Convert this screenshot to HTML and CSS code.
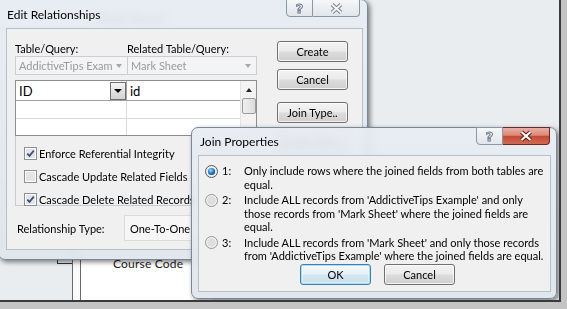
FILE: index.html
```html
<!DOCTYPE html>
<html>
<head>
<meta charset="utf-8">
<link rel="stylesheet" href="styles.css">
</head>
<body>
<div class="screen">
  <div class="bg-mark">Mark Sheet</div>
  <div class="rel-line"></div>
  <div class="table-box">
    <div class="table-inner"><span class="field">Course Code</span></div>
  </div>

  <div class="win edit">
    <div class="titlebar"><span class="title">Edit Relationships</span></div>
    <div class="caption">
      <div class="cap help"><span class="q">?</span></div>
      <div class="cap close">
        <svg width="13" height="11" viewBox="0 0 13 11"><path d="M2 1.5 L11 9.5 M11 1.5 L2 9.5" stroke="#7b8794" stroke-width="4" fill="none"/><path d="M2 1.5 L11 9.5 M11 1.5 L2 9.5" stroke="#f3f5f7" stroke-width="1.8" fill="none"/></svg>
      </div>
    </div>
    <div class="panel edit-panel">
      <div class="top">
        <div class="left">
          <div class="labels"><span>Table/Query:</span><span>Related Table/Query:</span></div>
          <div class="combos">
            <div class="combo"><span>AddictiveTips Exam</span><i class="arrow"></i></div>
            <div class="combo"><span>Mark Sheet</span><i class="arrow"></i></div>
          </div>
          <div class="grid">
            <div class="cells">
              <div class="row r1">
                <div class="cell c1"><span>ID</span><span class="dd"><i class="tri"></i></span></div>
                <div class="cell c2">id</div>
              </div>
              <div class="row"><div class="cell c1"></div><div class="cell c2"></div></div>
              <div class="row last"><div class="cell c1"></div><div class="cell c2"></div></div>
            </div>
            <div class="vscroll">
              <div class="sb-up"><i class="up"></i></div>
              <div class="thumb"></div>
            </div>
          </div>
          <div class="group">
            <div class="chk">
              <svg width="13" height="13" viewBox="0 0 13 13"><rect x="0.5" y="0.5" width="12" height="12" fill="#fff" stroke="#8e8f8f"/><rect x="2" y="2" width="9" height="9" fill="#e2e5e9"/><path d="M3.3 6.6 L5.5 8.9 L9.8 3.6" stroke="#3b4f7a" stroke-width="1.7" fill="none"/></svg>
              <span>Enforce Referential Integrity</span>
            </div>
            <div class="chk">
              <svg width="13" height="13" viewBox="0 0 13 13"><rect x="0.5" y="0.5" width="12" height="12" fill="#fff" stroke="#8e8f8f"/><rect x="2" y="2" width="9" height="9" fill="#e2e5e9"/></svg>
              <span>Cascade Update Related Fields</span>
            </div>
            <div class="chk">
              <svg width="13" height="13" viewBox="0 0 13 13"><rect x="0.5" y="0.5" width="12" height="12" fill="#fff" stroke="#8e8f8f"/><rect x="2" y="2" width="9" height="9" fill="#e2e5e9"/><path d="M3.3 6.6 L5.5 8.9 L9.8 3.6" stroke="#3b4f7a" stroke-width="1.7" fill="none"/></svg>
              <span>Cascade Delete Related Records</span>
            </div>
          </div>
        </div>
        <div class="buttons">
          <div class="btn b-create">Create</div>
          <div class="btn b-cancel">Cancel</div>
          <div class="btn b-join">Join Type..</div>
          <div class="btn b-new">Create New...</div>
        </div>
      </div>
      <div class="reltype">
        <span class="rt-label">Relationship Type:</span>
        <div class="rt-box">One-To-One</div>
      </div>
    </div>
  </div>

  <div class="win join">
    <div class="titlebar"><span class="title">Join Properties</span></div>
    <div class="caption">
      <div class="cap help"><span class="q">?</span></div>
      <div class="cap close active">
        <svg width="14" height="12" viewBox="0 0 14 12"><path d="M2.5 2 L11.5 10 M11.5 2 L2.5 10" stroke="#5a1c14" stroke-width="4.2" fill="none"/><path d="M2.5 2 L11.5 10 M11.5 2 L2.5 10" stroke="#ffffff" stroke-width="2.2" fill="none"/></svg>
      </div>
    </div>
    <div class="panel join-panel">
      <div class="options">
        <div class="opt">
          <svg class="radio" width="13" height="13" viewBox="0 0 13 13"><defs><radialGradient id="rsel" cx="40%" cy="35%" r="65%"><stop offset="0" stop-color="#a9dcff"/><stop offset="0.5" stop-color="#3b8fd6"/><stop offset="1" stop-color="#15477e"/></radialGradient></defs><circle cx="6.5" cy="6.5" r="6" fill="#eef0f2" stroke="#4d5a66"/><circle cx="6.5" cy="6.5" r="3.6" fill="url(#rsel)"/></svg>
          <span class="num">1:</span>
          <span class="txt">Only include rows where the joined fields from both tables are<br>equal.</span>
        </div>
        <div class="opt">
          <svg class="radio" width="13" height="13" viewBox="0 0 13 13"><circle cx="6.5" cy="6.5" r="6" fill="#f2f2f2" stroke="#949494"/><circle cx="6.5" cy="6.5" r="4.4" fill="#dedede"/></svg>
          <span class="num">2:</span>
          <span class="txt">Include ALL records from 'AddictiveTips Example' and only<br>those records from 'Mark Sheet' where the joined fields are<br>equal.</span>
        </div>
        <div class="opt">
          <svg class="radio" width="13" height="13" viewBox="0 0 13 13"><circle cx="6.5" cy="6.5" r="6" fill="#f2f2f2" stroke="#949494"/><circle cx="6.5" cy="6.5" r="4.4" fill="#dedede"/></svg>
          <span class="num">3:</span>
          <span class="txt">Include ALL records from 'Mark Sheet' and only those records<br>from 'AddictiveTips Example' where the joined fields are equal.</span>
        </div>
      </div>
      <div class="actions">
        <div class="btn default">OK</div>
        <div class="btn">Cancel</div>
      </div>
    </div>
  </div>
</div>
</body>
</html>
```
FILE: styles.css
```css
* { box-sizing: border-box; }
html, body { margin: 0; padding: 0; }
body {
  width: 567px; height: 309px; overflow: hidden;
  background: #c4c4c4;
  font-family: Lato, "Noto Sans", sans-serif;
  font-size: 11px; color: #000;
}
.screen {
  position: relative;
  width: 561px; height: 302px;
  background: #e9edf0;
  border-right: 2px solid #3a3a3a;
  border-bottom: 2px solid #3a3a3a;
  overflow: hidden;
}
.bg-mark {
  position: absolute; left: 98px; top: 11px;
  font-size: 13px; font-weight: bold; color: #6a6a6a;
}
.rel-line {
  position: absolute; left: 57px; top: 256px;
  width: 15px; height: 8px;
  border-left: 1px solid #333; border-bottom: 1px solid #333;
}
.table-box {
  position: absolute; left: 72px; top: 240px;
  width: 140px; height: 70px;
  border-left: 1px solid #6a6a6a;
  background: #fafafa;
}
.table-inner {
  margin-left: 7px; height: 100%;
  border-left: 1px solid #6a6a6a;
  background: #fff;
  padding: 17px 0 0 32px;
  line-height: 14px;
  font-size: 12px;
}
.field { color: #222; letter-spacing: 0.2px; }

.win {
  position: absolute;
  border: 1px solid #7a8794;
  background: linear-gradient(rgba(231,236,242,0.9), rgba(223,229,236,0.92));
  backdrop-filter: blur(4px);
  box-shadow: 2px 2px 5px rgba(0,0,0,0.5);
}
.edit { left: -2px; top: -1px; width: 370px; height: 261px; border-radius: 0 7px 7px 7px; }
.join { left: 191px; top: 127px; width: 366px; height: 172px; border-radius: 7px; }

.titlebar { height: 28px; padding-left: 8px; display: flex; align-items: center; }
.join .titlebar { height: 27px; padding-left: 8px; }
.title { font-size: 12px; color: #000; }

.caption { position: absolute; top: -1px; right: 7px; display: flex; }
.join .caption { right: 6px; }
.cap {
  height: 18px; display: flex; align-items: center; justify-content: center;
  border: 1px solid #8a97a4;
  background: linear-gradient(#f5f7f9, #e1e6ec);
}
.help { width: 27px; border-radius: 0 0 0 4px; }
.close { width: 47px; border-left: none; border-radius: 0 0 4px 0; }
.close.active {
  border-color: #6a2a21;
  background: linear-gradient(#e9b0a4 0%, #dc8a79 45%, #c64a34 52%, #cf6a55 100%);
}
.q {
  font-family: "DejaVu Sans", sans-serif; font-weight: bold; font-size: 13px;
  color: #eef2f5; -webkit-text-stroke: 1px #6d7a88; line-height: 1;
}

.panel { background: #f0f0f0; border: 1px solid #b6c0ca; }
.edit-panel {
  margin-left: 7px; width: 357px; height: 222px;
  padding: 12px 0 0 8px;
  display: flex; flex-direction: column;
}
.top { display: flex; }
.left { width: 242px; display: flex; flex-direction: column; }
.labels { display: grid; grid-template-columns: 112px 130px; height: 15px; line-height: 15px; }
.combos { display: grid; grid-template-columns: 113px 129px; height: 19px; }
.combo {
  border: 1px solid #c9ced3; background: #f4f4f4; color: #9a9a9a;
  display: flex; align-items: center; justify-content: space-between;
  padding: 0 4px 0 3px; overflow: hidden; white-space: nowrap;
}
.combo + .combo { border-left: none; }
.arrow {
  flex: none;
  width: 0; height: 0; border-left: 3.5px solid transparent; border-right: 3.5px solid transparent;
  border-top: 4px solid #a8a8a8; margin-right: 1px;
}
.grid {
  margin-top: 5px; height: 56px; display: flex;
  border: 1px solid #8a8e94; background: #fff;
}
.cells { flex: 1; display: flex; flex-direction: column; }
.row { display: grid; grid-template-columns: 111px 1fr; height: 18px; border-bottom: 1px solid #d9d9d9; }
.row.r1 { height: 20px; border-bottom: 1px solid #a0a0a0; }
.row.last { border-bottom: none; height: 16px; }
.cell { display: flex; align-items: center; font-size: 13px; }
.c1 { border-right: 1px solid #d9d9d9; padding-left: 3px; justify-content: space-between; }
.r1 .c1 { border-right: 1px solid #a0a0a0; padding-right: 0; }
.c2 { padding-left: 3px; }
.dd {
  width: 16px; height: 18px; border: 1px solid #707070;
  background: linear-gradient(#f4f4f4, #d2d2d2);
  display: flex; align-items: center; justify-content: center;
}
.tri { width: 0; height: 0; border-left: 4px solid transparent; border-right: 4px solid transparent; border-top: 4px solid #000; }
.vscroll {
  width: 16px; border-left: 1px solid #e4e4e4; background: #f3f3f3;
  display: flex; flex-direction: column; align-items: center;
}
.sb-up { height: 17px; width: 100%; display: flex; align-items: center; justify-content: center; }
.up { width: 0; height: 0; border-left: 3.5px solid transparent; border-right: 3.5px solid transparent; border-bottom: 4px solid #222; }
.thumb {
  width: 14px; height: 16px; border: 1px solid #9a9a9a; border-radius: 2px;
  background: linear-gradient(90deg, #f0f0f0, #dcdcdc);
}
.group {
  border: 1px solid #c6ccd2; border-top: none;
  height: 70px; width: 280px;
  padding: 11px 0 0 8px;
  display: flex; flex-direction: column; gap: 10px;
}
.chk { display: flex; align-items: center; height: 13px; gap: 2px; white-space: nowrap; }
.chk span { line-height: 13px; }
.buttons { margin-left: 20px; display: flex; flex-direction: column; }
.btn {
  width: 71px; height: 21px; flex: none;
  border: 1px solid #707070; border-radius: 3px;
  background: linear-gradient(#f3f3f3 0%, #ebebeb 48%, #dcdcdc 52%, #cfcfcf 100%);
  box-shadow: inset 0 0 0 1px rgba(255,255,255,0.75);
  display: flex; align-items: center; justify-content: center;
  white-space: nowrap;
}
.b-cancel { margin-top: 7px; }
.b-join { margin-top: 12px; }
.b-new { margin-top: 8px; }
.reltype { margin-top: 9px; display: flex; align-items: center; height: 26px; padding-left: 2px; }
.rt-label { width: 107px; }
.rt-box {
  height: 26px; width: 140px; border: 1px solid #dcdcdc; background: #f6f6f6;
  display: flex; align-items: center; padding-left: 5px;
}

.join-panel {
  margin-left: 6px; width: 353px; height: 137px;
  padding: 8px 0 6px 6px;
  display: flex; flex-direction: column;
}
.options { display: flex; flex-direction: column; gap: 2px; }
.opt { display: flex; align-items: flex-start; line-height: 13.5px; white-space: nowrap; }
.radio { flex: none; margin-top: 0.5px; }
.num { flex: none; width: 22px; margin-left: 4px; }
.txt { flex: none; }
.actions { margin-top: auto; display: flex; justify-content: center; gap: 13px; }
.btn.default {
  border-color: #3c7fb1;
  box-shadow: inset 0 0 0 1px #a9def6, inset 0 0 0 2px rgba(255,255,255,0.4);
  background: linear-gradient(#f2f8fb 0%, #e6f1f7 48%, #d4e6f1 52%, #c8dfec 100%);
}
```
